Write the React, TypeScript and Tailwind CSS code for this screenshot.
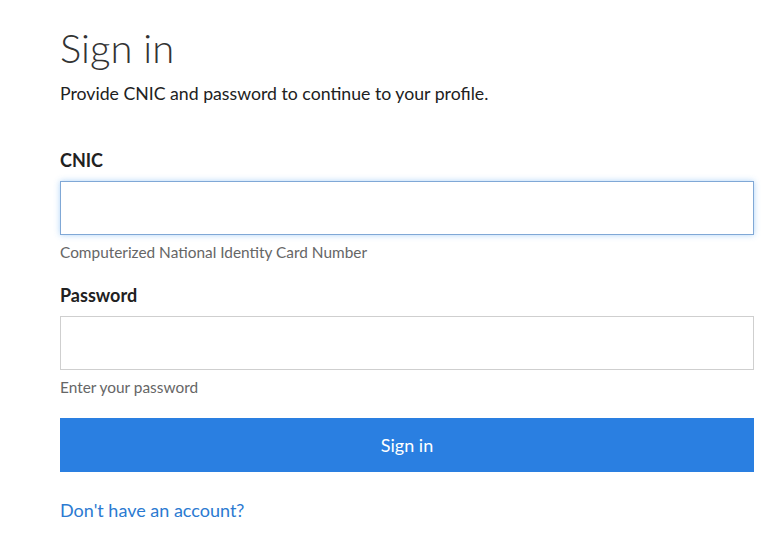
import React from 'react';

export default function App() {
  return (
    <div className="min-h-[541px] bg-white pl-[60px] pr-[20px] pt-[22px] font-['Lato','Noto_Sans',sans-serif] text-[#212121]">
      <h1 className="text-[40px] font-light leading-[52px] text-[#333]">Sign in</h1>
      <p className="mt-[8px] text-[17.7px] leading-[24px]">Provide CNIC and password to continue to your profile.</p>

      <form className="mt-[42px] flex flex-col" onSubmit={(e) => e.preventDefault()}>
        <label className="text-[18px] font-bold leading-[24px]">CNIC</label>
        <input
          className="mt-[9px] h-[54px] w-full border border-[#80a8d6] px-3 text-[18px] shadow-[0_0_6px_rgba(80,160,240,0.45)] outline-none"
        />
        <span className="mt-[7px] text-[15.4px] leading-[20px] text-[#666]">Computerized National Identity Card Number</span>

        <label className="mt-[21px] text-[18px] font-bold leading-[24px]">Password</label>
        <input
          type="password"
          className="mt-[9px] h-[54px] w-full border border-[#cfcfcf] px-3 text-[18px] outline-none"
        />
        <span className="mt-[7px] text-[15.4px] leading-[20px] text-[#666]">Enter your password</span>

        <button
          type="submit"
          className="mt-[21px] h-[54px] w-full bg-[#2a7fe1] text-[18px] text-white"
        >
          Sign in
        </button>

        <a href="#" className="mt-[26px] self-start text-[18px] leading-[24px] text-[#2b7ad1]">
          Don't have an account?
        </a>
      </form>
    </div>
  );
}
